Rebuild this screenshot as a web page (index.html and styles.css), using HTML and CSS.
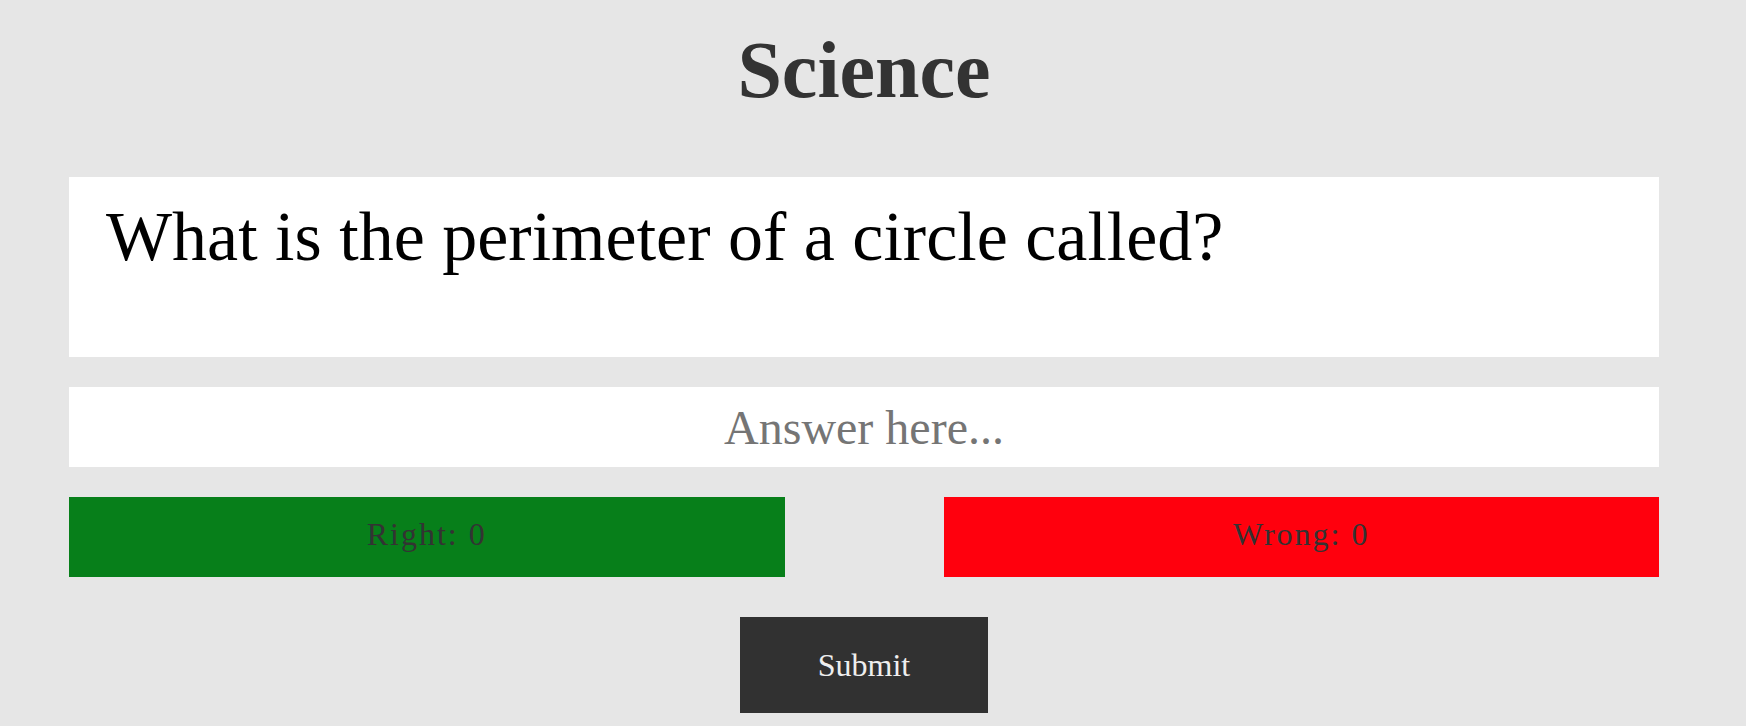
FILE: index.html
```html
<!DOCTYPE html>
<html lang="en">
<head>
<meta charset="utf-8">
<title>Science Quiz</title>
<link rel="stylesheet" href="styles.css">
</head>
<body>
<div class="page">
  <h1 class="title">Science</h1>
  <div class="question">What is the perimeter of a circle called?</div>
  <input class="answer" type="text" placeholder="Answer here...">
  <div class="scores">
    <div class="score score-right">Right: 0</div>
    <div class="score score-wrong">Wrong: 0</div>
  </div>
  <button class="submit" type="button">Submit</button>
</div>
</body>
</html>
```

FILE: styles.css
```css
html, body {
  margin: 0;
  padding: 0;
  background: #e6e6e6;
}

body {
  font-family: "Liberation Serif", "Times New Roman", serif;
  color: #333;
}

.page {
  width: 1728px;
  display: flex;
  flex-direction: column;
  align-items: center;
}

.title {
  margin: 24px 0 61px;
  font-size: 80px;
  line-height: 92px;
  font-weight: bold;
  color: #333;
}

.question {
  box-sizing: border-box;
  width: 1590px;
  height: 180px;
  padding: 20px 37px 0;
  background: #fff;
  color: #000;
  font-size: 70px;
  line-height: 80px;
}

.answer {
  box-sizing: border-box;
  width: 1590px;
  height: 80px;
  margin-top: 30px;
  padding: 0;
  border: none;
  outline: none;
  background: #fff;
  text-align: center;
  font-family: "Liberation Serif", "Times New Roman", serif;
  font-size: 48px;
  color: #000;
}

.answer::placeholder {
  color: #757575;
}

.scores {
  width: 1590px;
  margin-top: 30px;
  display: flex;
  justify-content: space-between;
}

.score {
  box-sizing: border-box;
  width: 45%;
  height: 80px;
  padding-top: 19px;
  text-align: center;
  font-size: 32px;
  line-height: 36px;
  letter-spacing: 2px;
  color: #333;
}

.score-right {
  background: #077f1a;
}

.score-wrong {
  background: #ff000d;
}

.submit {
  width: 248px;
  height: 96px;
  margin-top: 40px;
  border: none;
  background: #313131;
  color: #eeeeee;
  font-family: "Liberation Serif", "Times New Roman", serif;
  font-size: 32px;
  cursor: pointer;
}
```
